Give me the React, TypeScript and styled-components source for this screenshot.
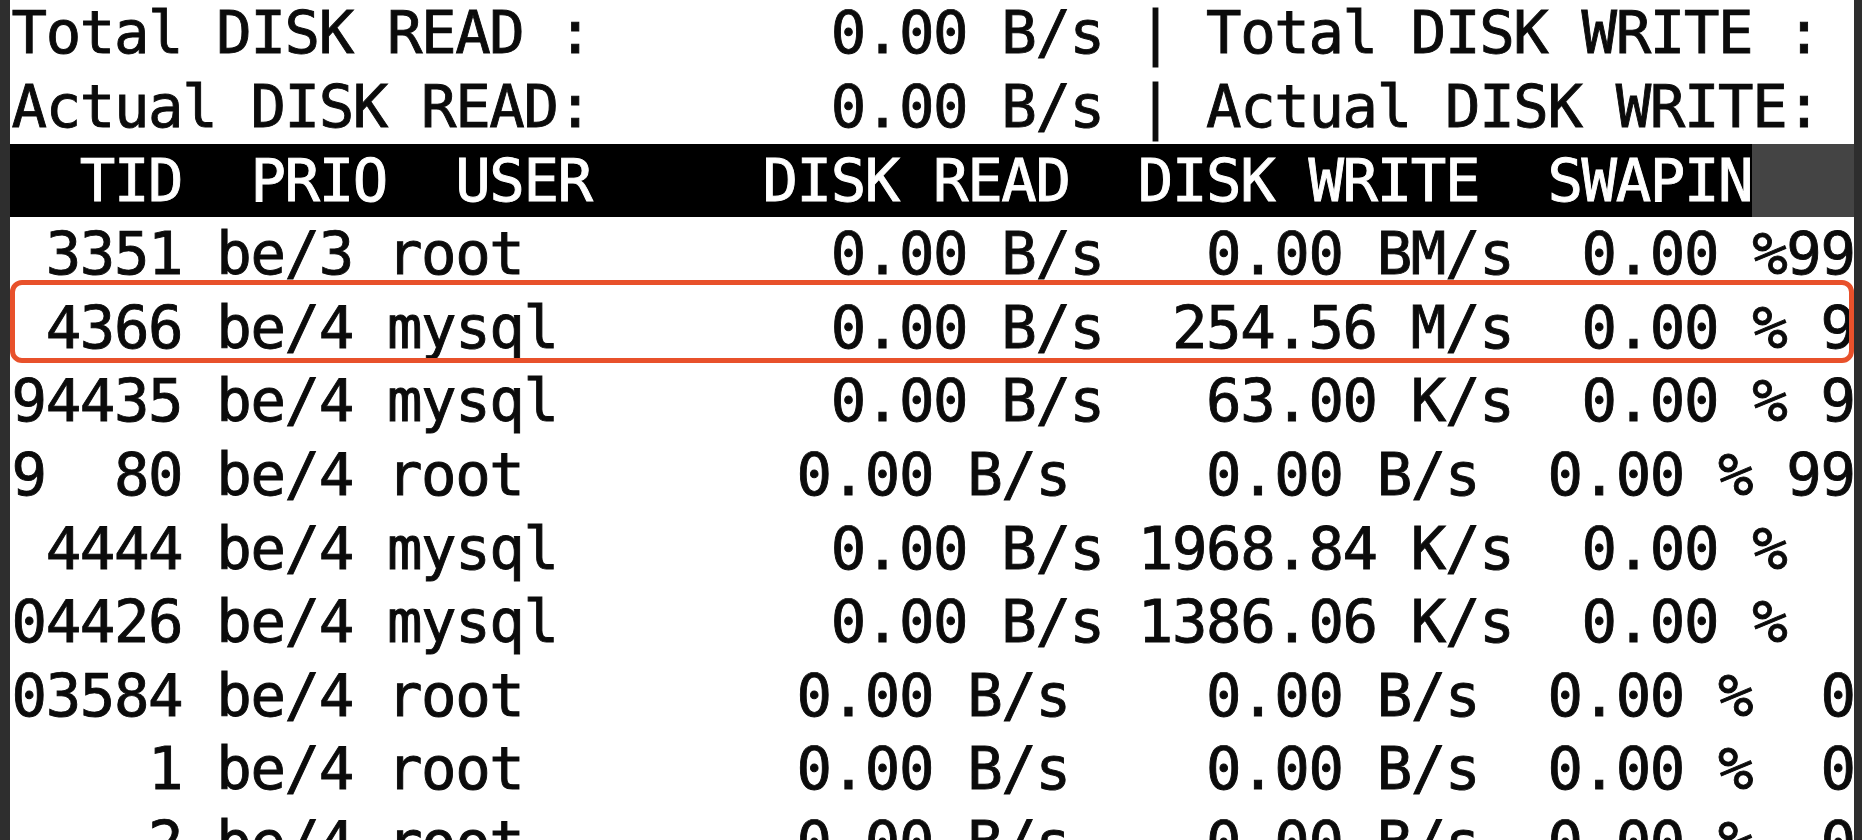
import React from "react";
import styled, { createGlobalStyle, css } from "styled-components";

const LINE_H = 73.6;

const GlobalStyle = createGlobalStyle`
  html, body {
    margin: 0;
    padding: 0;
    background: #2e2e2e;
  }
  body {
    width: 1862px;
    height: 840px;
    overflow: hidden;
  }
`;

const Frame = styled.div`
  height: 840px;
  padding: 0 8px 0 10px;
  background: #2e2e2e;
  overflow: hidden;
`;

const Screen = styled.div`
  height: 840px;
  background: #ffffff;
  overflow: hidden;
  font-family: "DejaVu Sans Mono", "Liberation Mono", monospace;
  font-size: 59px;
  letter-spacing: -1.39px;
  line-height: ${LINE_H}px;
  color: #0b0b0b;
  -webkit-text-stroke: 0.9px currentColor;
`;

const Lines = styled.div`
  margin-top: -3.6px;
`;

const Line = styled.div<{ $highlight?: boolean }>`
  position: relative;
  height: ${LINE_H}px;
  padding-left: 1.5px;
  white-space: pre;
  ${(p) =>
    p.$highlight &&
    css`
      &::after {
        content: "";
        position: absolute;
        left: 0;
        right: 0;
        top: -11px;
        bottom: 1px;
        border: 5px solid #e8512b;
        border-radius: 12px;
        pointer-events: none;
      }
    `}
`;

const HeaderBar = styled.div`
  display: flex;
  height: ${LINE_H}px;
  background: #444444;
`;

const HeaderLabel = styled.div`
  width: 1742px;
  padding-left: 1.5px;
  box-sizing: border-box;
  background: #000000;
  color: #ffffff;
  white-space: pre;
`;

type Token = [number, string];

const place = (tokens: Token[]): string => {
  let s = "";
  for (const [col, text] of tokens) {
    if (s.length < col) s = s + " ".repeat(col - s.length);
    s = s.slice(0, col) + text;
  }
  return s;
};

const summary: string[] = [
  place([
    [0, "Total DISK READ :"],
    [24, "0.00 B/s"],
    [33, "|"],
    [35, "Total DISK WRITE :"],
  ]),
  place([
    [0, "Actual DISK READ:"],
    [24, "0.00 B/s"],
    [33, "|"],
    [35, "Actual DISK WRITE:"],
  ]),
];

const header = "  TID  PRIO  USER     DISK READ  DISK WRITE  SWAPIN";

type Row = { text: string; highlight?: boolean };

const rows: Row[] = [
  {
    text: place([
      [1, "3351"],
      [6, "be/3"],
      [11, "root"],
      [24, "0.00 B/s"],
      [35, "0.00 BM/s"],
      [46, "0.00 %99"],
    ]),
  },
  {
    text: place([
      [1, "4366"],
      [6, "be/4"],
      [11, "mysql"],
      [24, "0.00 B/s"],
      [34, "254.56 M/s"],
      [46, "0.00 % 9"],
    ]),
    highlight: true,
  },
  {
    text: place([
      [0, "94435"],
      [6, "be/4"],
      [11, "mysql"],
      [24, "0.00 B/s"],
      [35, "63.00 K/s"],
      [46, "0.00 % 9"],
    ]),
  },
  {
    text: place([
      [0, "9"],
      [3, "80"],
      [6, "be/4"],
      [11, "root"],
      [23, "0.00 B/s"],
      [35, "0.00 B/s"],
      [45, "0.00 % 99"],
    ]),
  },
  {
    text: place([
      [1, "4444"],
      [6, "be/4"],
      [11, "mysql"],
      [24, "0.00 B/s"],
      [33, "1968.84 K/s"],
      [46, "0.00 %"],
    ]),
  },
  {
    text: place([
      [0, "04426"],
      [6, "be/4"],
      [11, "mysql"],
      [24, "0.00 B/s"],
      [33, "1386.06 K/s"],
      [46, "0.00 %"],
    ]),
  },
  {
    text: place([
      [0, "03584"],
      [6, "be/4"],
      [11, "root"],
      [23, "0.00 B/s"],
      [35, "0.00 B/s"],
      [45, "0.00 %"],
      [53, "0"],
    ]),
  },
  {
    text: place([
      [4, "1"],
      [6, "be/4"],
      [11, "root"],
      [23, "0.00 B/s"],
      [35, "0.00 B/s"],
      [45, "0.00 %"],
      [53, "0"],
    ]),
  },
  {
    text: place([
      [4, "2"],
      [6, "be/4"],
      [11, "root"],
      [23, "0.00 B/s"],
      [35, "0.00 B/s"],
      [45, "0.00 %"],
      [53, "0"],
    ]),
  },
];

export default function App() {
  return (
    <>
      <GlobalStyle />
      <Frame>
        <Screen>
          <Lines>
            {summary.map((s, i) => (
              <Line key={`s${i}`}>{s}</Line>
            ))}
            <HeaderBar>
              <HeaderLabel>{header}</HeaderLabel>
            </HeaderBar>
            {rows.map((r, i) => (
              <Line key={`r${i}`} $highlight={r.highlight}>
                {r.text}
              </Line>
            ))}
          </Lines>
        </Screen>
      </Frame>
    </>
  );
}
